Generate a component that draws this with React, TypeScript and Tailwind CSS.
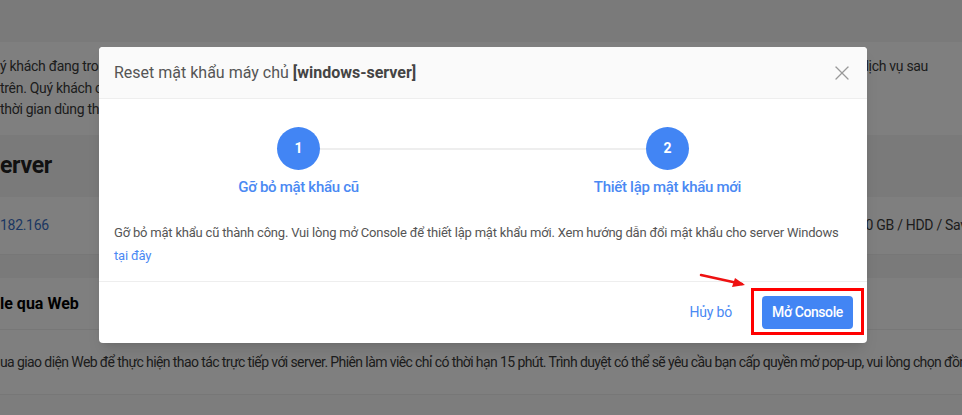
import { X } from "lucide-react";

function BackgroundPage() {
  return (
    <div className="flex h-[415px] flex-col overflow-hidden bg-[#f7f7f7] text-[14px] tracking-[-0.3px] text-[#3a3a3a]">
      <div className="h-[42px] bg-[#f4f4f4]" />

      <div className="flex h-[93px] flex-col whitespace-nowrap bg-white pt-[14px] leading-[21.5px]">
        <div className="flex">
          <span className="w-[861px] shrink-0 overflow-hidden">ý khách đang trong thời gian dùng thử của dịch vụ</span>
          <span>dịch vụ sau</span>
        </div>
        <div>trên. Quý khách có thể tiếp tục sử dụng</div>
        <div>thời gian dùng thử</div>
      </div>

      <div className="flex h-[62px] items-center bg-[#f5f5f5] text-[23px] font-bold tracking-[-0.3px] text-[#222]">
        erver
      </div>

      <div className="flex h-[58px] items-center whitespace-nowrap border-b border-[#eee] bg-white">
        <span className="w-[858px] shrink-0 text-[#3b6fc4]">182.166</span>
        <span className="overflow-hidden">50 GB / HDD / Saving</span>
      </div>

      <div className="h-[23px] bg-[#f5f5f5]" />

      <div className="flex h-[52px] items-center border-b border-[#eee] bg-white text-[16px] font-bold tracking-normal text-black">
        le qua Web
      </div>

      <div className="flex h-[65px] items-center whitespace-nowrap border-b border-[#eee] bg-white tracking-[-0.6px]">
        ua giao diện Web để thực hiện thao tác trực tiếp với server. Phiên làm viêc chỉ có thời hạn 15 phút. Trình duyệt có thể sẽ yêu cầu bạn cấp quyền mở pop-up, vui lòng chọn đồng ý
      </div>

      <div className="flex-1 bg-[#fafafa]" />
    </div>
  );
}

function Step({ n, label }: { n: number; label: string }) {
  return (
    <div className="relative z-10 flex flex-col items-center">
      <div className="flex h-[43px] w-[43px] items-center justify-center rounded-full bg-[#4285f4] text-[14px] font-bold text-white">
        {n}
      </div>
      <div className="mt-[7px] text-[15px] font-medium leading-[20px] tracking-[-0.3px] text-[#4a89f3]">
        {label}
      </div>
    </div>
  );
}

export default function App() {
  return (
    <div className="relative h-[415px] w-[962px] overflow-hidden font-['Roboto',sans-serif]">
      <BackgroundPage />

      <div className="absolute inset-0 bg-black/50">
        <div className="ml-[99px] mt-[47px] w-[768px] overflow-hidden rounded-[4px] bg-white shadow-lg">
          <div className="flex h-[52px] items-center justify-between border-b border-[#eee] bg-[#fafafa] pl-[15px] pr-[13px]">
            <h2 className="text-[16px] text-[#555]">
              Reset mật khẩu máy chủ <span className="font-bold text-[#444]">[windows-server]</span>
            </h2>
            <X className="h-6 w-6 text-[#999]" strokeWidth={1.3} />
          </div>

          <div className="px-[15px] pb-[14px] pt-[28px]">
            <div className="relative grid grid-cols-2">
              <div className="absolute left-1/4 right-1/4 top-[21px] h-[2px] bg-[#eee]" />
              <Step n={1} label="Gỡ bỏ mật khẩu cũ" />
              <Step n={2} label="Thiết lập mật khẩu mới" />
            </div>

            <p className="mt-[24px] text-[13px] leading-[23px] tracking-[-0.2px] text-[#555]">
              Gỡ bỏ mật khẩu cũ thành công. Vui lòng mở Console để thiết lập mật khẩu mới. Xem hướng dẫn đổi mật khẩu cho server Windows
              <br />
              <a className="text-[#4a89f3]">tại đây</a>
            </p>
          </div>

          <div className="flex h-[62px] items-center justify-end gap-[15px] border-t border-[#eee] pr-[14px]">
            <button className="px-[15px] text-[14px] tracking-[-0.2px] text-[#4a89f3]">Hủy bỏ</button>
            <button className="h-[33px] w-[91px] rounded-[4px] bg-[#4285f4] text-[14px] font-medium tracking-[-0.4px] text-white">
              Mở Console
            </button>
          </div>
        </div>
      </div>

      {/* annotation: red box + arrow */}
      <div className="absolute left-[751px] top-[288px] h-[47px] w-[113px] border-[3px] border-[#ff0000]" />
      <svg className="absolute left-[698px] top-[270px]" width="52" height="20" viewBox="0 0 52 20">
        <line x1="3" y1="5" x2="44" y2="14" stroke="#ee1111" strokeWidth="2.5" strokeLinecap="round" />
        <path d="M47 15 L34 17 L37 8 Z" fill="#ee1111" />
      </svg>
    </div>
  );
}
